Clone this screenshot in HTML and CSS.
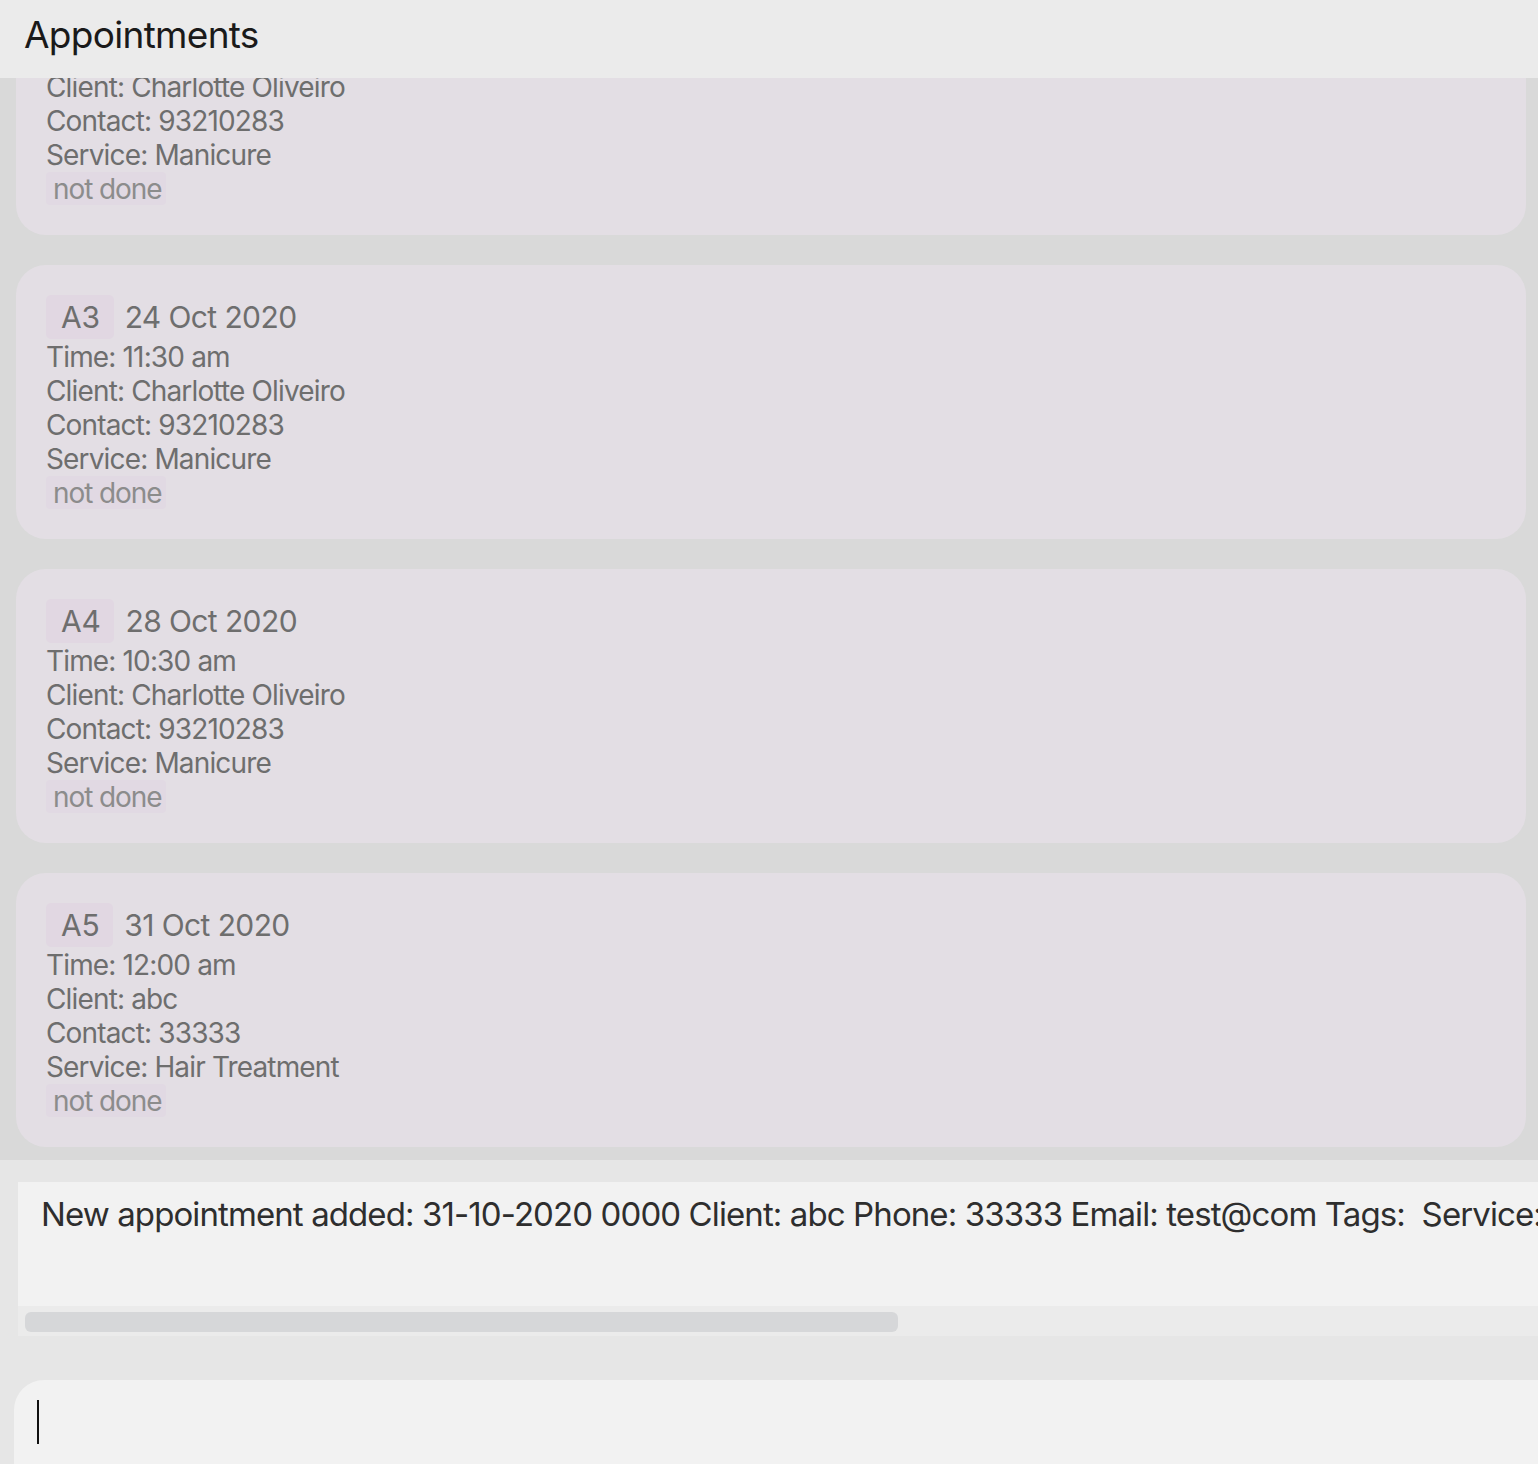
FILE: index.html
```html
<!DOCTYPE html>
<html>
<head>
<meta charset="utf-8">
<link rel="stylesheet" href="styles.css">
</head>
<body>
<div class="app">
  <header class="header">Appointments</header>
  <section class="list-pane">
    <div class="list">
      <div class="card card-partial">
        <div class="line">Client: Charlotte Oliveiro</div>
        <div class="line">Contact: 93210283</div>
        <div class="line">Service: Manicure</div>
        <div class="status-row"><span class="status">not done</span></div>
      </div>
      <div class="card">
        <div class="title-row"><span class="id">A3</span><span class="date">24 Oct 2020</span></div>
        <div class="line">Time: 11:30 am</div>
        <div class="line">Client: Charlotte Oliveiro</div>
        <div class="line">Contact: 93210283</div>
        <div class="line">Service: Manicure</div>
        <div class="status-row"><span class="status">not done</span></div>
      </div>
      <div class="card">
        <div class="title-row"><span class="id">A4</span><span class="date">28 Oct 2020</span></div>
        <div class="line">Time: 10:30 am</div>
        <div class="line">Client: Charlotte Oliveiro</div>
        <div class="line">Contact: 93210283</div>
        <div class="line">Service: Manicure</div>
        <div class="status-row"><span class="status">not done</span></div>
      </div>
      <div class="card">
        <div class="title-row"><span class="id">A5</span><span class="date">31 Oct 2020</span></div>
        <div class="line">Time: 12:00 am</div>
        <div class="line">Client: abc</div>
        <div class="line">Contact: 33333</div>
        <div class="line">Service: Hair Treatment</div>
        <div class="status-row"><span class="status">not done</span></div>
      </div>
    </div>
  </section>
  <section class="bottom">
    <div class="result">
      <div class="result-text">New appointment added: 31-10-2020 0000 Client: abc Phone: 33333 Email: test@com Tags: &nbsp;Service: Hair Treatment</div>
      <div class="hscroll"><div class="thumb"></div></div>
    </div>
    <div class="command"><span class="caret"></span></div>
  </section>
</div>
</body>
</html>
```
FILE: styles.css
```css
html, body {
  margin: 0;
  padding: 0;
  background: #e6e6e6;
  overflow: hidden;
}
.app {
  width: 1538px;
  height: 1464px;
  display: flex;
  flex-direction: column;
  font-family: Inter, "Noto Sans", sans-serif;
  overflow: hidden;
}
.header {
  height: 78px;
  flex: none;
  background: #ebebeb;
  color: #1a1a1a;
  font-size: 37px;
  letter-spacing: -0.7px;
  padding-left: 24px;
  line-height: 70px;
  box-sizing: border-box;
  position: relative;
  z-index: 2;
}
.list-pane {
  height: 1082px;
  flex: none;
  background: #d9d9d9;
  overflow: hidden;
  padding: 0 12px 0 16px;
}
.list {
  display: flex;
  flex-direction: column;
  gap: 30px;
}
.card {
  background: #e3dee4;
  border-radius: 30px;
  height: 274px;
  box-sizing: border-box;
  padding: 30px 30px 0 30px;
  color: #6e6e6e;
  font-size: 28px;
  letter-spacing: -0.85px;
}
.card-partial {
  height: 157px;
  padding-top: 0;
  border-radius: 0 0 30px 30px;
}
.card-partial .line:first-child {
  height: 26px;
  line-height: 18px;
}
.title-row {
  display: flex;
  align-items: center;
  gap: 11px;
  height: 44px;
  margin-bottom: 1px;
}
.id {
  background: #e1d7e2;
  border-radius: 5px;
  height: 44px;
  line-height: 44px;
  padding: 0 14px 0 15px;
  font-size: 30px;
  letter-spacing: -0.3px;
}
.date {
  font-size: 30px;
  letter-spacing: -0.6px;
}
.line {
  height: 34px;
  line-height: 34px;
}
.status-row {
  display: flex;
  height: 33px;
}
.status {
  background: #e1d9e3;
  color: #8c8c8c;
  border-radius: 4px;
  padding: 0 5px 0 7px;
  line-height: 34px;
  letter-spacing: -1.1px;
}
.bottom {
  flex: 1;
  background: #e6e6e6;
  padding-top: 22px;
}
.result {
  margin-left: 18px;
  width: 1560px;
  height: 154px;
  background: #f2f2f2;
  display: flex;
  flex-direction: column;
}
.result-text {
  height: 124px;
  box-sizing: border-box;
  padding: 12px 0 0 23px;
  color: #2e2e2e;
  font-size: 33px;
  letter-spacing: -0.9px;
  white-space: nowrap;
  overflow: hidden;
}
.hscroll {
  height: 30px;
  background: #ebebeb;
  padding: 6px 0 0 7px;
  box-sizing: border-box;
}
.thumb {
  width: 873px;
  height: 20px;
  background: #d6d7d9;
  border-radius: 6px;
}
.command {
  margin-top: 44px;
  margin-left: 14px;
  width: 1600px;
  height: 120px;
  background: #f2f2f2;
  border-radius: 30px 0 0 0;
  padding: 20px 0 0 23px;
  box-sizing: border-box;
}
.caret {
  display: block;
  width: 2px;
  height: 44px;
  background: #111;
}
```
